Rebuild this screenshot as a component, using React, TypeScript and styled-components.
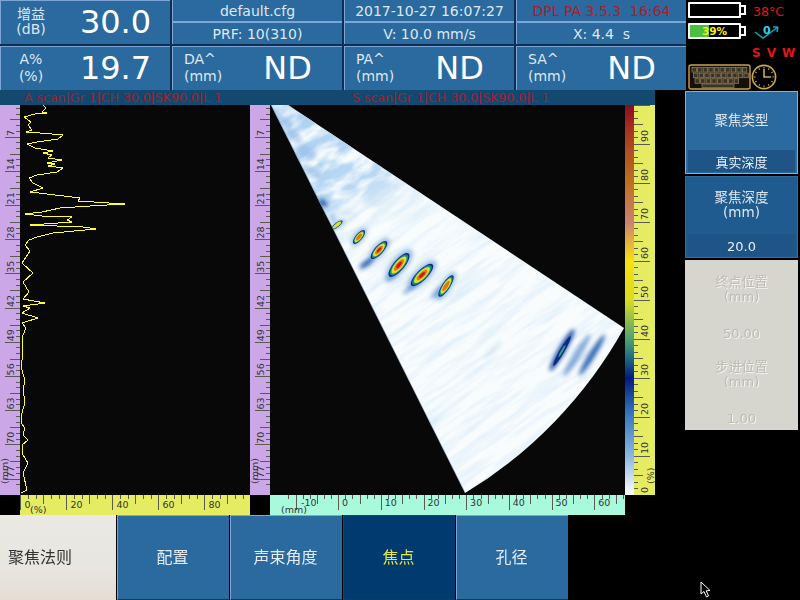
import { FC } from "react";
import styled, { createGlobalStyle } from "styled-components";

const FONT = '"DejaVu Sans", "Noto Sans CJK SC", sans-serif';

const range = (n: number) => Array.from({ length: n }, (_, i) => i);

// traced from the A scan trace, page coordinates
const ascanUpper = [
  [130, 15], [138, 25], [125, 35], [140, 40], [105, 42], [72, 52], [92, 65], [85, 75], [95, 90], [78, 96],
  [120, 98], [190, 106], [175, 118], [110, 125], [80, 132], [105, 143], [160, 152], [130, 158], [155, 165],
  [145, 175], [185, 180], [140, 188], [165, 192], [145, 198], [188, 205], [170, 215], [110, 225], [88, 235],
  [100, 250], [130, 263], [90, 275], [140, 282], [240, 295], [235, 303], [375, 312], [270, 318], [180, 325],
  [125, 335], [75, 342], [125, 348], [215, 352], [200, 360], [215, 367], [90, 375], [250, 382], [288, 388],
  [160, 400], [110, 412], [88, 420], [75, 435], [90, 452], [65, 490], [100, 518], [70, 545], [88, 575], [70, 598],
];
const ascanLower = [
  [135, 10], [70, 18], [90, 25], [65, 40], [115, 55], [65, 68], [78, 85], [70, 105], [65, 130], [70, 160],
  [62, 200], [75, 240], [68, 270], [75, 305], [65, 340], [62, 370], [75, 385], [68, 405], [85, 420], [65, 435],
  [70, 465], [85, 488], [68, 520], [82, 570], [62, 580],
];
const ascanPoints = [
  ...ascanUpper.map(([x, y]) => `${Math.round(x / 3)},${Math.round(100 + y / 3)}`),
  ...ascanLower.map(([x, y]) => `${Math.round(x / 3)},${Math.round(300 + y / 3)}`),
].join(" ");

const blobs = [
  { x: 337, y: 225, rx: 6, ry: 1.9, rot: -38, level: 3 },
  { x: 359, y: 237, rx: 7.5, ry: 3, rot: -50, level: 4 },
  { x: 379, y: 250, rx: 10, ry: 3.8, rot: -48, level: 5 },
  { x: 399, y: 265, rx: 13, ry: 4.8, rot: -50, level: 5 },
  { x: 422, y: 275, rx: 13, ry: 4.6, rot: -45, level: 5 },
  { x: 446, y: 286, rx: 11, ry: 3.4, rot: -57, level: 4 },
];
const ringColors = ["#0b2c86", "#1f8f86", "#dfe02a", "#e0751c", "#c8141c"];
const ringScale = [1.15, 1, 0.82, 0.55, 0.3];

const haze = [
  { x: 367, y: 263, rx: 9, ry: 3, rot: -35, o: 0.9, c: "#1b55ad" },
  { x: 411, y: 288, rx: 10, ry: 2.5, rot: -35, o: 0.55, c: "#2e6dbb" },
  { x: 437, y: 292, rx: 9, ry: 3, rot: -50, o: 0.5, c: "#3b7cc5" },
  { x: 392, y: 278, rx: 8, ry: 2.5, rot: -35, o: 0.45, c: "#3b7cc5" },
  { x: 323, y: 203, rx: 5, ry: 3, rot: 40, o: 0.85, c: "#13479a" },
  { x: 333, y: 219, rx: 5, ry: 2, rot: 60, o: 0.4, c: "#3b7cc5" },
  { x: 562, y: 350, rx: 24, ry: 3.6, rot: -60, o: 0.95, c: "#123f9d" },
  { x: 577, y: 355, rx: 25, ry: 3.6, rot: -58, o: 0.55, c: "#2a6abc" },
  { x: 592, y: 355, rx: 24, ry: 3.2, rot: -58, o: 0.9, c: "#1d56ad" },
  { x: 493, y: 350, rx: 12, ry: 3, rot: -45, o: 0.14, c: "#3776c4" },
  { x: 285, y: 122, rx: 10, ry: 5, rot: 30, o: 0.45, c: "#82b0e0" },
  { x: 294, y: 136, rx: 9, ry: 5, rot: 40, o: 0.5, c: "#82b0e0" },
  { x: 306, y: 152, rx: 12, ry: 6, rot: 30, o: 0.4, c: "#82b0e0" },
  { x: 312, y: 172, rx: 12, ry: 5, rot: 30, o: 0.5, c: "#7aaade" },
];

const FAN = "M 271 105 L 288 105 L 624 328 A 445 445 0 0 1 465 493 Z";

const App: FC = () => {
  return (
    <Screen>
      <GlobalStyle />
      <TopBar>
        <Readouts>
          <BigCell>
            <Label $center $tight>增益<br />(dB)</Label>
            <Value>30.0</Value>
          </BigCell>
          <StackCell>
            <SubCell>default.cfg</SubCell>
            <SubCell>PRF: 10(310)</SubCell>
          </StackCell>
          <StackCell>
            <SubCell>2017-10-27 16:07:27</SubCell>
            <SubCell>V: 10.0 mm/s</SubCell>
          </StackCell>
          <StackCell>
            <SubCell $alert>DPL PA 3.5.3&nbsp; 16:64</SubCell>
            <SubCell>X: 4.4&nbsp; s</SubCell>
          </StackCell>
          <BigCell>
            <Label $center>A%<br />(%)</Label>
            <Value>19.7</Value>
          </BigCell>
          <BigCell>
            <Label>DA^<br />(mm)</Label>
            <Value>ND</Value>
          </BigCell>
          <BigCell>
            <Label>PA^<br />(mm)</Label>
            <Value>ND</Value>
          </BigCell>
          <BigCell>
            <Label>SA^<br />(mm)</Label>
            <Value>ND</Value>
          </BigCell>
        </Readouts>
        <StatusPanel>
          <StatusRow>
            <Battery $level={0} />
            <Temperature>38°C</Temperature>
          </StatusRow>
          <StatusRow>
            <Battery $level={39}>39%</Battery>
            <Encoder>
              <svg width="26" height="14" viewBox="0 0 26 14">
                <path d="M1 7 L9 13 L24 2 M24 2 L19 2 M24 2 L23 7" fill="none" stroke="#12a8c0" strokeWidth="1.5" />
                <text x="9" y="9" fontSize="11" fontWeight="700" fill="#2fd0e8">0</text>
              </svg>
            </Encoder>
          </StatusRow>
          <Flags>
            <span>S</span>
            <span>V</span>
            <span>W</span>
          </Flags>
          <StatusRow>
            <KeyboardIcon />
            <ClockIcon />
          </StatusRow>
        </StatusPanel>
      </TopBar>

      <Main>
        <Workspace>
          <TitleBar>
            <TitleText>A scan|Gr 1|CH 30.0|SK90.0|L 1</TitleText>
            <TitleText>S scan|Gr 1|CH 30.0|SK90.0|L 1</TitleText>
          </TitleBar>
          <Views>
            <DepthRuler />
            <Plot width="230" height="390" viewBox="20 105 230 390">
              <polyline points={ascanPoints} fill="none" stroke="#ffff30" strokeWidth="1" shapeRendering="crispEdges" />
            </Plot>
            <DepthRuler />
            <SScan />
            <ColorBar />
            <ColorRuler />
          </Views>
          <BottomRulers>
            <RulerGap />
            <AmplitudeRuler />
            <RulerGap />
            <PositionRuler />
          </BottomRulers>
        </Workspace>
        <SidePanel>
          <SideButton $raised>
            <SideLabel>聚焦类型</SideLabel>
            <SideValue>真实深度</SideValue>
          </SideButton>
          <SideButton>
            <SideLabel>聚焦深度<br />(mm)</SideLabel>
            <SideValue>20.0</SideValue>
          </SideButton>
          <DisabledGroup>
            <DisabledItem>
              <div>终点位置<br />(mm)</div>
              <div>50.00</div>
            </DisabledItem>
            <DisabledItem>
              <div>步进位置<br />(mm)</div>
              <div>1.00</div>
            </DisabledItem>
          </DisabledGroup>
        </SidePanel>
      </Main>

      <Menu>
        <MenuTitle>聚焦法则</MenuTitle>
        <MenuTab>配置</MenuTab>
        <MenuTab>声束角度</MenuTab>
        <MenuTab $active>焦点</MenuTab>
        <MenuTab>孔径</MenuTab>
      </Menu>

      <Cursor width="12" height="18" viewBox="0 0 12 18">
        <path d="M1 1 L1 13 L4 10.5 L6.5 16 L8.5 15 L6.2 9.8 L10 9.5 Z" fill="#000" stroke="#fff" strokeWidth="1" />
      </Cursor>
    </Screen>
  );
};

const SScan: FC = () => (
  <Plot width="355" height="390" viewBox="270 105 355 390">
    <defs>
      <clipPath id="fan">
        <path d={FAN} />
      </clipPath>
      <filter id="streaks" x="0" y="0" width="100%" height="100%">
        <feTurbulence type="fractalNoise" baseFrequency="0.018 0.14" numOctaves="3" seed="7" />
        <feColorMatrix values="0 0 0 0 0.6  0 0 0 0 0.78  0 0 0 0 0.95  2 0 0 0 -0.85" />
      </filter>
      <filter id="mottle" x="0" y="0" width="100%" height="100%">
        <feTurbulence type="fractalNoise" baseFrequency="0.035 0.08" numOctaves="3" seed="3" />
        <feColorMatrix values="0 0 0 0 0.42  0 0 0 0 0.64  0 0 0 0 0.88  3.2 0 0 0 -1.05" />
      </filter>
      <filter id="soft"><feGaussianBlur stdDeviation="2.2" /></filter>
      <filter id="edge"><feGaussianBlur stdDeviation="0.4" /></filter>
      <linearGradient id="fade" gradientUnits="userSpaceOnUse" x1="280" y1="110" x2="350" y2="240">
        <stop offset="0" stopColor="#fff" />
        <stop offset="0.7" stopColor="#fff" stopOpacity="0.85" />
        <stop offset="1" stopColor="#fff" stopOpacity="0" />
      </linearGradient>
      <mask id="fadeMask">
        <rect x="270" y="105" width="355" height="390" fill="url(#fade)" />
      </mask>
    </defs>
    <g clipPath="url(#fan)">
      <rect x="270" y="105" width="355" height="390" fill="#f8fcfd" />
      <g transform="rotate(-35 450 300)">
        <rect x="100" y="0" width="700" height="600" filter="url(#streaks)" opacity="0.65" />
      </g>
      <g mask="url(#fadeMask)">
        <g transform="rotate(-30 300 170)">
          <rect x="200" y="70" width="220" height="220" filter="url(#mottle)" />
        </g>
      </g>
      <g filter="url(#soft)">
        {haze.map((h, i) => (
          <ellipse key={i} cx={h.x} cy={h.y} rx={h.rx} ry={h.ry} fill={h.c} opacity={h.o}
            transform={`rotate(${h.rot} ${h.x} ${h.y})`} />
        ))}
        {blobs.map((b, i) => (
          <ellipse key={i} cx={b.x} cy={b.y} rx={b.rx * 1.5} ry={b.ry * 1.6} fill="#3b7cc5" opacity="0.5"
            transform={`rotate(${b.rot} ${b.x} ${b.y})`} />
        ))}
      </g>
      <path d="M 271 105 L 465 493" stroke="#16357e" strokeWidth="1.2" opacity="0.35" />
      <g filter="url(#edge)">
        <ellipse cx="562" cy="351" rx="17" ry="2.4" fill="#0c2c86" transform="rotate(-60 562 351)" />
        <ellipse cx="562" cy="351" rx="7" ry="1.1" fill="#3a9a84" transform="rotate(-60 562 351)" />
        {blobs.map((b, i) => (
          <g key={i} transform={`rotate(${b.rot} ${b.x} ${b.y})`}>
            {range(b.level).map((l) => (
              <ellipse key={l} cx={b.x} cy={b.y} rx={b.rx * ringScale[l]} ry={b.ry * ringScale[l]} fill={ringColors[l]} />
            ))}
          </g>
        ))}
      </g>
    </g>
  </Plot>
);

const DepthRuler: FC = () => (
  <RulerSvg $bg="#cba7e8" width="20" height="390" viewBox="0 105 20 390">
    {range(68).map((i) => {
      const y = 137 + (i - 6) * (34.2 / 6);
      if (y < 105 || y > 495) return null;
      const len = i % 6 === 0 ? 15 : i % 3 === 0 ? 10 : 4;
      return <line key={i} x1={20 - len} x2="20" y1={y} y2={y} />;
    })}
    {range(11).map((i) => {
      const y = 137 + i * 34.2;
      return (
        <text key={i} transform={`translate(14 ${y - 1}) rotate(-90)`}>{(i + 1) * 7}</text>
      );
    })}
    <text transform="translate(8 484) rotate(-90)">(mm)</text>
  </RulerSvg>
);

const AmplitudeRuler: FC = () => (
  <RulerSvg $bg="#e6ec62" width="230" height="20" viewBox="20 495 230 20">
    {range(30).map((i) => {
      const x = 20.7 + i * (46 / 6);
      const len = i % 6 === 0 ? 15 : i % 3 === 0 ? 9 : 4;
      return <line key={i} x1={x} x2={x} y1="495" y2={495 + len} />;
    })}
    {range(5).map((i) => (
      <text key={i} x={24.5 + i * 46} y="508">{i * 20}</text>
    ))}
    <text x="30" y="513">(%)</text>
  </RulerSvg>
);

const PositionRuler: FC = () => (
  <RulerSvg $bg="#a9f9dd" width="355" height="20" viewBox="270 495 355 20">
    {range(48).map((i) => {
      const x = 296 + (i - 1) * (42.7 / 6);
      if (x < 270 || x > 625) return null;
      const len = i % 6 === 1 ? 15 : (i + 2) % 6 === 0 ? 9 : 4;
      return <line key={i} x1={x} x2={x} y1="495" y2={495 + len} />;
    })}
    {range(8).map((i) => (
      <text key={i} x={i === 0 ? 301 : 342 + (i - 1) * 42.7} y="506">{(i - 1) * 10}</text>
    ))}
    <text x="281" y="513">(mm)</text>
  </RulerSvg>
);

const ColorRuler: FC = () => (
  <RulerSvg $bg="#e6ec62" width="21" height="390" viewBox="634 105 21 390">
    {range(61).map((i) => {
      const y = 495 - i * 6.5;
      const len = i % 6 === 0 ? 16 : i % 3 === 0 ? 9 : 4;
      return <line key={i} x1="634" x2={634 + len} y1={y} y2={y} />;
    })}
    {range(10).map((i) => (
      <text key={i} transform={`translate(648 ${493 - i * 39}) rotate(-90)`}>{i * 10}</text>
    ))}
    <text transform="translate(654 484) rotate(-90)">(%)</text>
  </RulerSvg>
);

const KeyboardIcon: FC = () => (
  <svg width="63" height="26" viewBox="0 0 63 26">
    <rect x="1" y="1" width="61" height="24" rx="2" fill="#151008" stroke="#c8a24a" strokeWidth="1.4" />
    {range(3).map((r) =>
      range(r === 2 ? 8 : 10).map((c) => (
        <rect key={`${r}-${c}`} x={4 + r * 1.5 + c * 5.6} y={3.5 + r * 5.6} width="4.4" height="4.6"
          fill="#3a3428" stroke="#8b7a55" strokeWidth="0.8" />
      ))
    )}
    <rect x="14" y="20" width="32" height="3.4" fill="#3a3428" stroke="#8b7a55" strokeWidth="0.8" />
  </svg>
);

const ClockIcon: FC = () => (
  <svg width="26" height="26" viewBox="0 0 26 26">
    <circle cx="13" cy="13" r="11.6" fill="#000" stroke="#d0a850" strokeWidth="1.6" />
    {range(12).map((i) => (
      <line key={i} x1="13" y1="2.8" x2="13" y2="4.6" stroke="#d0a850" strokeWidth="1" transform={`rotate(${i * 30} 13 13)`} />
    ))}
    <path d="M13 5 L13 13 L20 13" fill="none" stroke="#d0a850" strokeWidth="1.6" />
  </svg>
);

export default App;

const GlobalStyle = createGlobalStyle`
  html, body {
    margin: 0;
    padding: 0;
    background: #000;
  }
`;

const Screen = styled.div`
  position: relative;
  width: 800px;
  height: 600px;
  overflow: hidden;
  background: #000;
  color: #e8eef4;
  font-family: ${FONT};
  display: flex;
  flex-direction: column;
`;

const TopBar = styled.div`
  display: flex;
  height: 90px;
  flex: none;
`;

const Readouts = styled.div`
  display: grid;
  grid-template-columns: repeat(4, 170px);
  grid-template-rows: 44px 44px;
  gap: 2px;
  width: 686px;
  flex: none;
  background: #0d3050;
`;

const BigCell = styled.div`
  display: flex;
  align-items: center;
  background: #2b6a9e;
  border-top: 1px solid #7ea5d8;
  border-left: 1px solid #7ea5d8;
  padding-bottom: 1px;
`;

const Label = styled.div<{ $center?: boolean; $tight?: boolean }>`
  width: 60px;
  flex: none;
  box-sizing: border-box;
  padding-left: ${(p) => (p.$center ? 0 : "11px")};
  text-align: ${(p) => (p.$center ? "center" : "left")};
  font-size: 14px;
  line-height: ${(p) => (p.$tight ? "15px" : "17px")};
  color: #dfe8f0;
  white-space: nowrap;
`;

const Value = styled.div`
  flex: 1;
  text-align: center;
  font-size: 32px;
  color: #fff;
`;

const StackCell = styled.div`
  display: grid;
  grid-template-rows: 21px 21px;
  gap: 2px;
  background: #7ea5d8;
  border-left: 1px solid #7ea5d8;
`;

const SubCell = styled.div<{ $alert?: boolean }>`
  display: flex;
  align-items: center;
  justify-content: center;
  background: #2b6a9e;
  font-size: 14px;
  color: ${(p) => (p.$alert ? "#a8202f" : "#dfe8f0")};
  white-space: nowrap;
`;

const StatusPanel = styled.div`
  flex: 1;
  display: grid;
  grid-template-rows: 20px 21px 23px 26px;
  padding-left: 2px;
`;

const StatusRow = styled.div`
  display: flex;
  align-items: center;
`;

const Battery = styled.div<{ $level: number }>`
  position: relative;
  box-sizing: border-box;
  width: 53px;
  height: 16px;
  flex: none;
  border: 2px solid #fff;
  border-radius: 1px;
  text-align: center;
  font-size: 10.5px;
  font-weight: 700;
  line-height: 12px;
  color: #f0f020;
  background: linear-gradient(to right, #48c040 ${(p) => p.$level}%, #000 ${(p) => p.$level}%);

  &::after {
    content: "";
    position: absolute;
    right: -7px;
    top: 1px;
    width: 3px;
    height: 6px;
    border: 2px solid #fff;
    border-left: 0;
  }
`;

const Temperature = styled.div`
  margin: 3px 0 0 12px;
  font-size: 12.5px;
  color: #e01818;
`;

const Encoder = styled.div`
  display: flex;
  margin: 3px 0 0 13px;
`;

const Flags = styled.div`
  display: flex;
  gap: 6px;
  padding-left: 64px;
  align-items: center;
  font-size: 12px;
  font-weight: 700;
  color: #e01818;
`;

const Main = styled.div`
  display: flex;
  height: 425px;
  flex: none;
`;

const Workspace = styled.div`
  width: 685px;
  flex: none;
`;

const TitleBar = styled.div`
  display: grid;
  grid-template-columns: 328px 327px;
  width: 655px;
  height: 15px;
  background: #14496f;
`;

const TitleText = styled.div`
  padding-left: 24px;
  font-size: 12.5px;
  line-height: 15px;
  color: #a02030;
  white-space: nowrap;
  overflow: hidden;
`;

const Views = styled.div`
  display: flex;
  height: 390px;
`;

const Plot = styled.svg`
  display: block;
  flex: none;
  background: #080808;
`;

const RulerSvg = styled.svg<{ $bg: string }>`
  display: block;
  flex: none;
  background: ${(p) => p.$bg};

  line {
    stroke: #5a5a50;
    stroke-width: 1;
    shape-rendering: crispEdges;
  }

  text {
    font-family: ${FONT};
    font-size: 9.5px;
    fill: #333;
  }
`;

const ColorBar = styled.div`
  width: 9px;
  flex: none;
  background: linear-gradient(
    to bottom,
    #8a0a20 0%,
    #a83020 6%,
    #b05020 12%,
    #c07020 20%,
    #cc8070 30%,
    #f8e010 40%,
    #d8dc20 50%,
    #4fa074 60%,
    #1d6a84 65%,
    #001a80 70%,
    #1c50a0 75%,
    #3c7cc4 80%,
    #8ab6e2 90%,
    #ffffff 100%
  );
`;

const BottomRulers = styled.div`
  display: flex;
  height: 20px;
`;

const RulerGap = styled.div`
  width: 20px;
  flex: none;
`;

const SidePanel = styled.div`
  width: 113px;
  flex: none;
  display: flex;
  flex-direction: column;
  margin-top: 1px;
`;

const SideButton = styled.div<{ $raised?: boolean }>`
  box-sizing: border-box;
  height: ${(p) => (p.$raised ? "83px" : "82px")};
  margin-bottom: 2px;
  display: flex;
  flex-direction: column;
  padding: 1px 2px;
  background: ${(p) => (p.$raised ? "#2b6a9e" : "#1f5b8e")};
  border: 1px solid ${(p) => (p.$raised ? "#86aedd" : "#2f6c9e")};
`;

const SideLabel = styled.div`
  flex: 1;
  display: flex;
  align-items: center;
  justify-content: center;
  text-align: center;
  padding-bottom: 3px;
  font-size: 13.5px;
  line-height: 15px;
  color: #dde6ee;
`;

const SideValue = styled.div`
  height: 22px;
  flex: none;
  background: #1f5586;
  text-align: center;
  font-size: 13px;
  line-height: 25px;
  color: #e8eef4;
`;

const DisabledGroup = styled.div`
  height: 170px;
  background: #d6d6ce;
  display: flex;
  flex-direction: column;
`;

const DisabledItem = styled.div`
  height: 85px;
  display: flex;
  flex-direction: column;
  justify-content: space-between;
  padding: 14px 0 4px;
  box-sizing: border-box;
  text-align: center;
  font-size: 13px;
  line-height: 15px;
  color: #bcbcb4;
  text-shadow: 1px 1px 0 #f4f4f0;
`;

const Menu = styled.div`
  display: flex;
  gap: 1px;
  height: 85px;
  flex: none;
`;

const MenuTitle = styled.div`
  width: 116px;
  flex: none;
  box-sizing: border-box;
  padding: 0 0 3px 8px;
  display: flex;
  align-items: center;
  font-size: 16px;
  color: #333;
  background: linear-gradient(to bottom, #eae9e4, #e8e6e0 60%, #e6dcd4);
`;

const MenuTab = styled.div<{ $active?: boolean }>`
  width: 112px;
  flex: none;
  box-sizing: border-box;
  padding: 0 2px 3px 0;
  display: flex;
  align-items: center;
  justify-content: center;
  font-size: 16px;
  color: ${(p) => (p.$active ? "#e8e83c" : "#e4ecf2")};
  background: ${(p) => (p.$active ? "#003a6e" : "#2b6a9e")};
  border-top: 1px solid ${(p) => (p.$active ? "#0a4a7c" : "#7ea5d8")};
  border-left: 1px solid ${(p) => (p.$active ? "#0a4a7c" : "#7ea5d8")};
  border-bottom: 1px solid #123a5c;
`;

const Cursor = styled.svg`
  position: absolute;
  left: 700px;
  top: 581px;
`;
